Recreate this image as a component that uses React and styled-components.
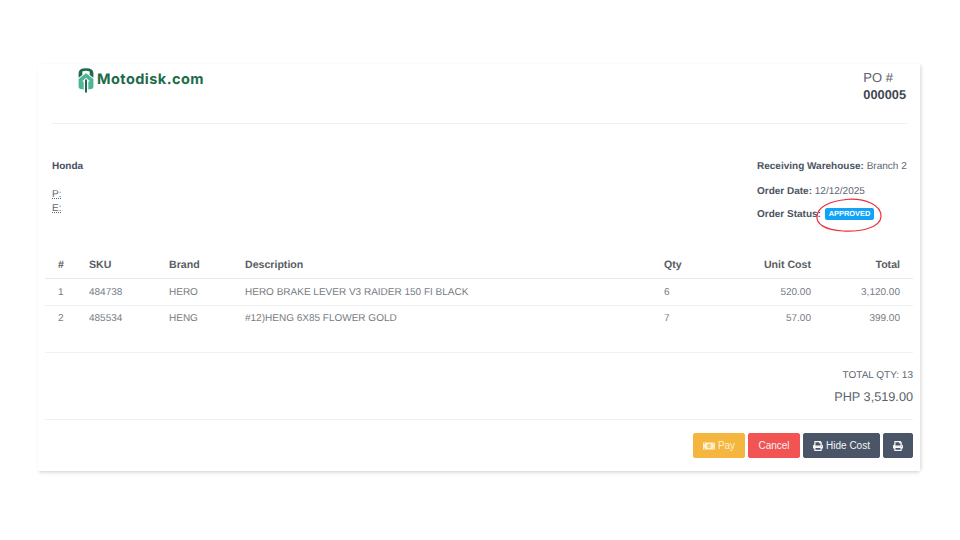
import React from "react";
import styled, { createGlobalStyle } from "styled-components";
import { FaPrint, FaMoneyBillAlt } from "react-icons/fa";

const Global = createGlobalStyle`
  html, body { margin: 0; padding: 0; background: #fff; }
  body { font-family: "Liberation Sans", Arial, sans-serif; color: #4a5568; text-rendering: geometricPrecision; }
`;
const Page = styled.div`
  width: 960px; height: 540px; padding: 64px 40px 0 38px; box-sizing: border-box; overflow: hidden;
`;
const Card = styled.div`
  position: relative; width: 882px; height: 407px; box-sizing: border-box; background: #fff;
  padding: 0 7px 0 7px;
  box-shadow: 0 3px 3px -1px rgba(60, 60, 70, 0.16), 3px 0 3px -1px rgba(60, 60, 70, 0.12);
`;
const Head = styled.div`
  display: flex; justify-content: space-between; height: 59px; margin: 0 6px 0 7px;
  border-bottom: 1px solid #eef0f2;
`;
const LogoWrap = styled.div`
  display: flex; align-items: center; gap: 3px; margin: 3px 0 0 26px; height: 26px;
`;
const LogoText = styled.span`
  position: relative; top: -1px;
  font-family: Inter, sans-serif; font-weight: 700; font-size: 14.5px; letter-spacing: 0.45px; color: #1e6a4a;
`;
const Po = styled.div`
  margin: 5px 1px 0 0; font-size: 13px; line-height: 17px; color: #5a626b;
  strong { display: block; font-size: 12.8px; color: #3f4650; font-weight: 700; }
`;
const Info = styled.div`
  display: flex; justify-content: space-between; margin: 36px 7px 0; height: 90px; font-size: 10px; color: #5d6573;
`;
const Vendor = styled.div`
  strong { display: block; line-height: 13px; color: #465062; margin-bottom: 15px; }
  abbr { display: block; line-height: 14px; width: fit-content; text-decoration: underline dotted; }
`;
const Meta = styled.div`
  width: 149px; display: flex; flex-direction: column;
  strong { color: #4b5563; font-weight: 700; }
`;
const MetaLine = styled.div`
  line-height: 13px; height: ${p => p.$h}px; white-space: nowrap;
`;
const Badge = styled.span`
  position: absolute; left: 787px; top: 144px; box-sizing: border-box; width: 49px; text-align: center; height: 12px; line-height: 12px;
  background: #12a2f8; color: #fff; border-radius: 2px; font-size: 7.4px; font-weight: 700;
`;
const Circle = styled.svg`
  position: absolute; left: 777px; top: 134px; width: 68px; height: 36px; overflow: visible;
`;
const Table = styled.table`
  border-collapse: collapse; width: 868px; table-layout: fixed; font-size: 10px; color: #777c82;
  th { font-weight: 700; font-size: 10.6px; color: #585d63; height: 27px; padding: 1px 7px 0 8px; text-align: left; border-bottom: 1px solid #e8eaec; }
  td { height: 24px; padding: 0 7px 2px 8px; border-bottom: 1px solid #eef0f2; }
  tbody tr:first-child td { height: 26px; padding-bottom: 0; }
  tr:last-child td { border-bottom: 0; }
  th:first-child, td:first-child { padding-left: 13px; }
  .r { text-align: right; padding-right: 13px; }
`;
const Totals = styled.div`
  margin-top: 20px; height: 68px; box-sizing: border-box; border-top: 1px solid #f0f1f3; border-bottom: 1px solid #f0f1f3;
  text-align: right; width: 868px; padding-top: 16px;
`;
const Qty = styled.div`font-size: 10px; line-height: 13px; color: #5d6674;`;
const Amount = styled.div`font-size: 12.7px; line-height: 17px; margin-top: 7px; color: #5a626b;`;
const Actions = styled.div`
  display: flex; justify-content: flex-end; gap: 3px; width: 868px; margin-top: 13px;
`;
const Button = styled.button`
  height: 25px; padding: 0; width: ${p => p.$w}px; border: 1px solid ${p => p.$bg}; border-radius: 2px; background: ${p => p.$bg};
  color: ${p => p.$fg || "#f4f5f7"}; font: 400 10px "Liberation Sans", Arial, sans-serif;
  display: inline-flex; align-items: center; justify-content: center; gap: 3px;
`;

const Logo = () => (
  <svg width="16" height="25" viewBox="0 0 16 25">
    <path d="M4.6 0.6 Q8 -0.2 11.4 0.6 Q15.4 1.6 15.4 5.5 L15.4 9.8 L11.7 7 L11.7 3.4 Q8 2.2 4.3 3.4 L4.3 7 L0.6 9.8 L0.6 5.5 Q0.6 1.6 4.6 0.6 Z" fill="#1e6a4a" />
    <path d="M8 5.2 L15.4 11 L15.4 19 Q15.4 20.6 13.5 21 L10.3 21.6 L10.3 13.6 L12 13.6 L8 9.8 L4 13.6 L5.7 13.6 L5.7 21.6 L2.5 21 Q0.6 20.6 0.6 19 L0.6 11 Z" fill="#4fb596" />
    <rect x="7" y="11.5" width="2" height="13" fill="#1e6a4a" />
  </svg>
);

const rows = [
  ["1", "484738", "HERO", "HERO BRAKE LEVER V3 RAIDER 150 FI BLACK", "6", "520.00", "3,120.00"],
  ["2", "485534", "HENG", "#12)HENG 6X85 FLOWER GOLD", "7", "57.00", "399.00"],
];

export default function App() {
  return (
    <Page>
      <Global />
      <Card>
        <Head>
          <LogoWrap><Logo /><LogoText>Motodisk.com</LogoText></LogoWrap>
          <Po>PO #<strong>000005</strong></Po>
        </Head>
        <Info>
          <Vendor>
            <strong>Honda</strong>
            <abbr>P:</abbr>
            <abbr>E:</abbr>
          </Vendor>
          <Meta>
            <MetaLine $h={25}><strong>Receiving Warehouse:</strong> Branch 2</MetaLine>
            <MetaLine $h={23}><strong>Order Date:</strong> 12/12/2025</MetaLine>
            <MetaLine $h={20}><strong>Order Status:</strong></MetaLine>
          </Meta>
        </Info>
        <Badge>APPROVED</Badge>
        <Circle viewBox="0 0 68 36">
          <path d="M30 1.5 C50 -0.5 67 7 66 19 C65 30 45 34 28 33 C10 32 1 26 2 18 C3 9 14 3 32 1.5" fill="none" stroke="#ee2f3a" strokeWidth="1.2" />
        </Circle>
        <Table>
          <colgroup>
            <col style={{ width: 36 }} /><col style={{ width: 80 }} /><col style={{ width: 76 }} />
            <col style={{ width: 419 }} /><col style={{ width: 70 }} /><col style={{ width: 98 }} /><col style={{ width: 89 }} />
          </colgroup>
          <thead>
            <tr>
              <th>#</th><th>SKU</th><th>Brand</th><th>Description</th><th>Qty</th>
              <th className="r">Unit Cost</th><th className="r">Total</th>
            </tr>
          </thead>
          <tbody>
            {rows.map(r => (
              <tr key={r[0]}>
                <td>{r[0]}</td><td>{r[1]}</td><td>{r[2]}</td><td>{r[3]}</td><td>{r[4]}</td>
                <td className="r">{r[5]}</td><td className="r">{r[6]}</td>
              </tr>
            ))}
          </tbody>
        </Table>
        <Totals>
          <Qty>TOTAL QTY: 13</Qty>
          <Amount>PHP 3,519.00</Amount>
        </Totals>
        <Actions>
          <Button $w={52} $bg="#f4b63f" $fg="#fdf0d2"><FaMoneyBillAlt size={12} />Pay</Button>
          <Button $w={52} $bg="#f25353">Cancel</Button>
          <Button $w={77} $bg="#4a5568"><FaPrint size={10} />Hide Cost</Button>
          <Button $w={30} $bg="#4a5568"><FaPrint size={10} /></Button>
        </Actions>
      </Card>
    </Page>
  );
}
